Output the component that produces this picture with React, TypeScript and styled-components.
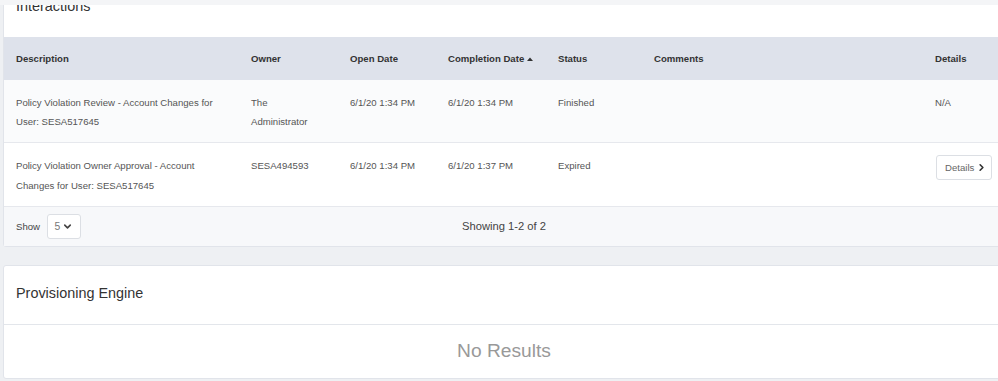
import React from 'react';
import styled, {createGlobalStyle} from 'styled-components';
import {ChevronRight, ChevronDown} from 'lucide-react';

const Global = createGlobalStyle`
  html, body {
    margin: 0;
    padding: 0;
    background: #eef0f3;
    overflow: hidden;
  }
  body {
    font-family: 'Liberation Sans', Arial, sans-serif;
    color: #555;
  }
`;

const Page = styled.div`
  width: 998px;
  height: 381px;
  display: flex;
  flex-direction: column;
  overflow: hidden;
`;

const TopStrip = styled.div`
  height: 5px;
  flex: none;
  background: #f4f5f7;
`;

const Scroll = styled.div`
  flex: 1;
  overflow: hidden;
  padding-left: 3px;
  display: flex;
  flex-direction: column;
  gap: 18px;
`;

const Card = styled.section<{$clipTop?: boolean}>`
  box-sizing: border-box;
  width: 1002px;
  flex: none;
  background: #fff;
  border: 1px solid #e1e4ea;
  border-radius: 3px;
  margin-top: ${(p) => (p.$clipTop ? '-27px' : '0')};
`;

const CardTitle = styled.h2<{$divider?: boolean}>`
  margin: 0;
  height: ${(p) => (p.$divider ? '59px' : '58px')};
  box-sizing: border-box;
  padding: 0 12px 4px;
  display: flex;
  align-items: center;
  font-size: 14.4px;
  font-weight: normal;
  color: #333;
  border-bottom: ${(p) => (p.$divider ? '1px solid #e3e6eb' : 'none')};
`;

const Grid = styled.div`
  display: grid;
  grid-template-columns: 235px 99px 98px 110px 96px 1fr 57px;
  padding: 0 12px;
`;

const HeadRow = styled(Grid)`
  height: 43px;
  align-items: center;
  background: #dee2eb;
  font-size: 9.6px;
  font-weight: bold;
  color: #333;
  white-space: nowrap;
`;

const Row = styled(Grid)<{$shade?: boolean}>`
  padding-top: 13px;
  padding-bottom: 11px;
  min-height: 38px;
  background: ${(p) => (p.$shade ? '#fafbfc' : '#fff')};
  border-bottom: 1px solid #e6e8ed;
  font-size: 9.6px;
  line-height: 19.2px;
  color: #555;
`;

const Cell = styled.div`
  padding-right: 25px;
`;

const SortArrow = styled.svg`
  margin-left: 3px;
  vertical-align: 1px;
`;

const DetailsButton = styled.button`
  display: inline-flex;
  align-items: center;
  gap: 2px;
  height: 25px;
  width: 56px;
  margin-left: 1px;
  margin-top: -1px;
  padding: 0 0 0 8px;
  box-sizing: border-box;
  background: #fff;
  border: 1px solid #dcdfe4;
  border-radius: 3px;
  font-family: inherit;
  font-size: 9.6px;
  color: #666;
`;

const Footer = styled.div`
  height: 39px;
  display: grid;
  grid-template-columns: 1fr auto 1fr;
  align-items: center;
  padding: 0 12px;
  background: #f7f8fa;
  font-size: 9.6px;
  color: #444;
`;

const ShowGroup = styled.div`
  display: flex;
  align-items: center;
  gap: 7px;
`;

const PageSize = styled.div`
  width: 34px;
  height: 25px;
  box-sizing: border-box;
  display: flex;
  align-items: center;
  justify-content: center;
  gap: 2px;
  background: #fff;
  border: 1px solid #dcdfe4;
  border-radius: 3px;
  font-size: 10.4px;
  color: #777;
`;

const Showing = styled.div`
  font-size: 11.2px;
  color: #444;
`;

const Empty = styled.div`
  height: 53px;
  display: flex;
  align-items: center;
  justify-content: center;
  font-size: 19.2px;
  color: #999;
`;

const rows = [
  {
    desc: 'Policy Violation Review - Account Changes for User: SESA517645',
    owner: 'The Administrator',
    open: '6/1/20 1:34 PM',
    done: '6/1/20 1:34 PM',
    status: 'Finished',
    details: false,
  },
  {
    desc: 'Policy Violation Owner Approval - Account Changes for User: SESA517645',
    owner: 'SESA494593',
    open: '6/1/20 1:34 PM',
    done: '6/1/20 1:37 PM',
    status: 'Expired',
    details: true,
  },
];

export default function App() {
  return (
    <>
      <Global />
      <Page>
        <TopStrip />
        <Scroll>
          <Card $clipTop>
            <CardTitle>Interactions</CardTitle>
            <HeadRow>
              <Cell>Description</Cell>
              <Cell>Owner</Cell>
              <Cell>Open Date</Cell>
              <Cell>
                Completion Date
                <SortArrow width='6' height='4' viewBox='0 0 6 4'>
                  <path d='M0 4 L3 0.5 L6 4 Z' fill='#333' />
                </SortArrow>
              </Cell>
              <Cell>Status</Cell>
              <Cell>Comments</Cell>
              <Cell>Details</Cell>
            </HeadRow>
            {rows.map((r, i) => (
              <Row key={i} $shade={i === 0}>
                <Cell>{r.desc}</Cell>
                <Cell>{r.owner}</Cell>
                <Cell>{r.open}</Cell>
                <Cell>{r.done}</Cell>
                <Cell>{r.status}</Cell>
                <Cell />
                <div>
                  {r.details ? (
                    <DetailsButton>
                      Details
                      <ChevronRight size={11} strokeWidth={3.5} color='#333' />
                    </DetailsButton>
                  ) : (
                    'N/A'
                  )}
                </div>
              </Row>
            ))}
            <Footer>
              <ShowGroup>
                Show
                <PageSize>
                  5
                  <ChevronDown size={11} strokeWidth={3.5} color='#444' />
                </PageSize>
              </ShowGroup>
              <Showing>Showing 1-2 of 2</Showing>
              <div />
            </Footer>
          </Card>
          <Card>
            <CardTitle $divider>Provisioning Engine</CardTitle>
            <Empty>No Results</Empty>
          </Card>
        </Scroll>
      </Page>
    </>
  );
}
